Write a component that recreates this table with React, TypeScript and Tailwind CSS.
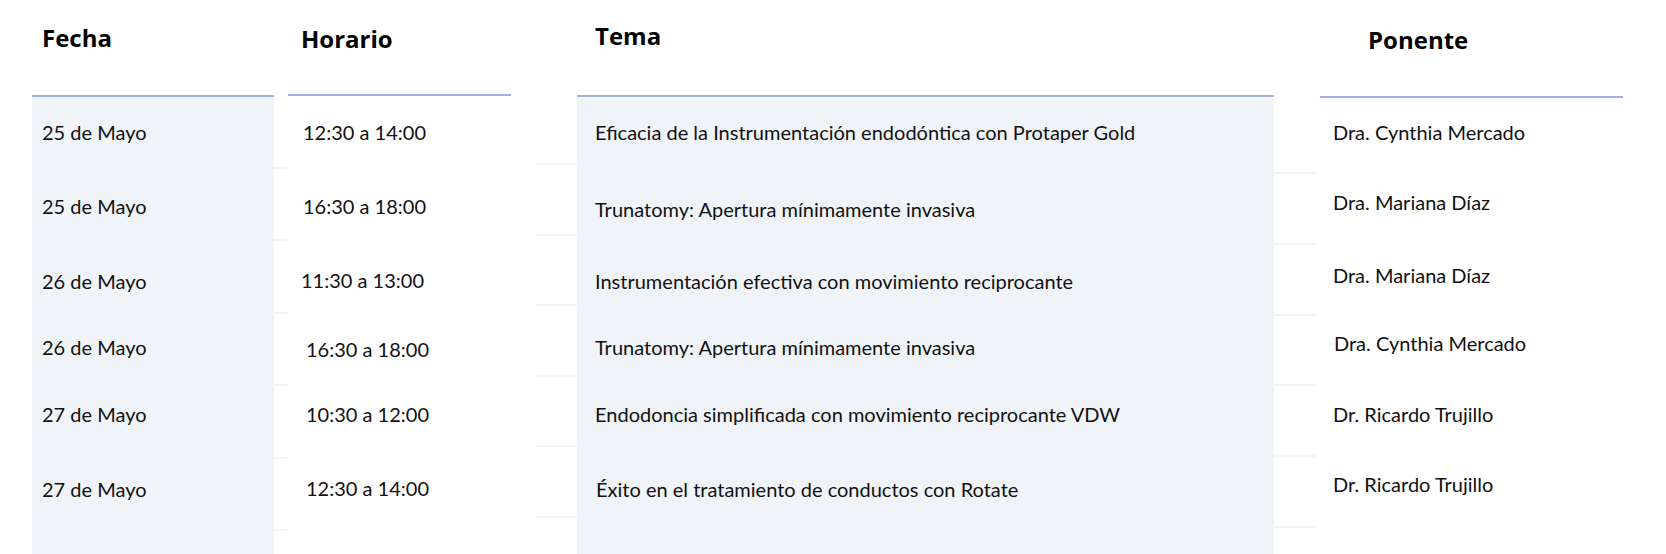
type Cell = { text: string; cls: string };

const FECHA: Cell[] = [
  { text: "25 de Mayo", cls: "mt-[23px]" },
  { text: "25 de Mayo", cls: "mt-[50px]" },
  { text: "26 de Mayo", cls: "mt-[51px]" },
  { text: "26 de Mayo", cls: "mt-[42px]" },
  { text: "27 de Mayo", cls: "mt-[43px]" },
  { text: "27 de Mayo", cls: "mt-[51px]" },
];

const HORARIO: Cell[] = [
  { text: "12:30 a 14:00", cls: "mt-[23px] pl-[15px]" },
  { text: "16:30 a 18:00", cls: "mt-[50px] pl-[15px]" },
  { text: "11:30 a 13:00", cls: "mt-[50px] pl-[13px]" },
  { text: "16:30 a 18:00", cls: "mt-[45px] pl-[18px]" },
  { text: "10:30 a 12:00", cls: "mt-[41px] pl-[18px]" },
  { text: "12:30 a 14:00", cls: "mt-[50px] pl-[18px]" },
];

const TEMA: Cell[] = [
  { text: "Eficacia de la Instrumentación endodóntica con Protaper Gold", cls: "mt-[22px] pl-[18px]" },
  { text: "Trunatomy: Apertura mínimamente invasiva", cls: "mt-[53px] pl-[18px]" },
  { text: "Instrumentación efectiva con movimiento reciprocante", cls: "mt-[48px] pl-[18px]" },
  { text: "Trunatomy: Apertura mínimamente invasiva", cls: "mt-[42px] pl-[18px]" },
  { text: "Endodoncia simplificada con movimiento reciprocante VDW", cls: "mt-[43px] pl-[18px]" },
  { text: "Éxito en el tratamiento de conductos con Rotate", cls: "mt-[51px] pl-[19px]" },
];

const PONENTE: Cell[] = [
  { text: "Dra. Cynthia Mercado", cls: "mt-[22px] pl-[17px]" },
  { text: "Dra. Mariana Díaz", cls: "mt-[46px] pl-[17px]" },
  { text: "Dra. Mariana Díaz", cls: "mt-[49px] pl-[17px]" },
  { text: "Dra. Cynthia Mercado", cls: "mt-[44px] pl-[18px]" },
  { text: "Dr. Ricardo Trujillo", cls: "mt-[47px] pl-[17px]" },
  { text: "Dr. Ricardo Trujillo", cls: "mt-[46px] pl-[17px]" },
];

const heading = "[font-family:'Open_Sans',sans-serif] font-bold text-[24px] leading-[32px] text-black";
const body = "[font-family:Lato,sans-serif] text-[20px] leading-[24px] text-[#111111] whitespace-nowrap";

function Cells({ cells }: { cells: Cell[] }) {
  return (
    <div className="flex flex-col">
      {cells.map((c, i) => (
        <p key={i} className={`${body} ${c.cls}`}>
          {c.text}
        </p>
      ))}
    </div>
  );
}

// thin grey row lines that only show in the gaps between columns
function Gap({ width, rows }: { width: string; rows: string[] }) {
  return (
    <div className={`${width} shrink-0 pt-[97px]`}>
      {rows.map((h, i) => (
        <div key={i} className={`${h} border-b-2 border-[#f3f4f6]`} />
      ))}
    </div>
  );
}

export default function App() {
  return (
    <div className="flex w-[1666px] h-[554px] overflow-hidden bg-white pl-[32px]">
      {/* Fecha */}
      <div className="w-[242px] shrink-0 flex flex-col">
        <div className="h-[97px] border-b-2 border-[#a3ade6] pl-[10px] pt-[22px]">
          <h3 className={heading}>Fecha</h3>
        </div>
        <div className="flex-1 bg-[#f0f4f8] pl-[10px]">
          <Cells cells={FECHA} />
        </div>
      </div>

      <Gap
        width="w-[14px]"
        rows={["h-[72px]", "h-[72.4px]", "h-[72.4px]", "h-[72.4px]", "h-[72.4px]", "h-[72.4px]"]}
      />

      {/* Horario */}
      <div className="w-[248px] shrink-0 flex flex-col">
        <div className="w-[223px] h-[96px] border-b-2 border-[#a3ade6] pl-[13px] pt-[23px]">
          <h3 className={heading}>Horario</h3>
        </div>
        <div className="pt-[1px]">
          <Cells cells={HORARIO} />
        </div>
      </div>

      <Gap
        width="w-[41px]"
        rows={["h-[68px]", "h-[70.6px]", "h-[70.6px]", "h-[70.6px]", "h-[70.6px]", "h-[70.6px]"]}
      />

      {/* Tema */}
      <div className="w-[697px] shrink-0 flex flex-col">
        <div className="h-[97px] border-b-2 border-[#a3ade6] pl-[18px] pt-[20px]">
          <h3 className={heading}>Tema</h3>
        </div>
        <div className="flex-1 mt-[1px] bg-[#f0f4f8]">
          <Cells cells={TEMA} />
        </div>
      </div>

      <Gap
        width="w-[42px]"
        rows={["h-[77px]", "h-[70.8px]", "h-[70.8px]", "h-[70.8px]", "h-[70.8px]", "h-[70.8px]"]}
      />

      {/* Ponente */}
      <div className="flex-1 flex flex-col">
        <div className="ml-[4px] w-[303px] h-[98px] border-b-2 border-[#a3ade6] pl-[48px] pt-[24px]">
          <h3 className={heading}>Ponente</h3>
        </div>
        <Cells cells={PONENTE} />
      </div>
    </div>
  );
}
